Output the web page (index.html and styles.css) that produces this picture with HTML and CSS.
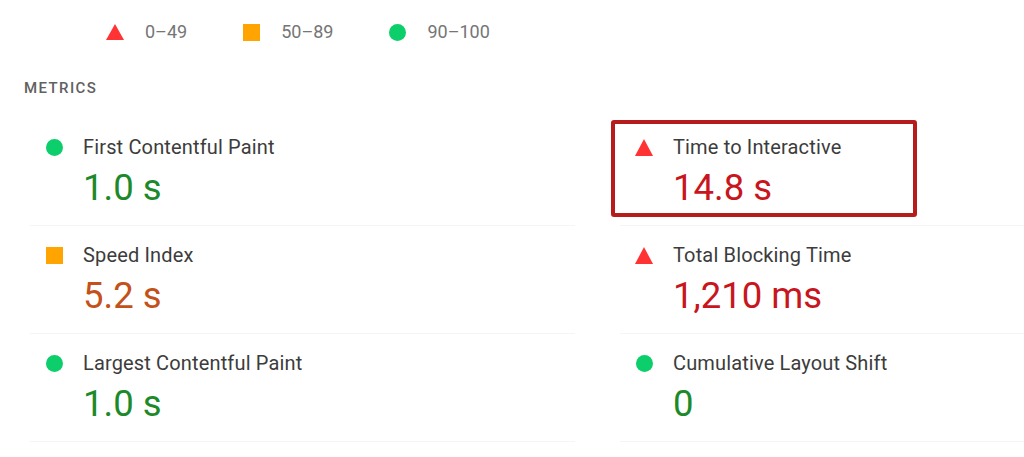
FILE: index.html
```html
<!DOCTYPE html>
<html lang="en">
<head>
  <meta charset="UTF-8">
  <title>Metrics</title>
  <link rel="stylesheet" href="styles.css">
</head>
<body>
  <div class="legend">
    <div class="legend-item"><span class="icon fail"></span>0–49</div>
    <div class="legend-item"><span class="icon average"></span>50–89</div>
    <div class="legend-item"><span class="icon pass"></span>90–100</div>
  </div>

  <div class="section-title">Metrics</div>

  <div class="metrics">
    <div class="metric">
      <span class="icon pass"></span>
      <div class="label">First Contentful Paint</div>
      <div class="value pass-text">1.0 s</div>
    </div>
    <div class="metric highlighted">
      <span class="icon fail"></span>
      <div class="label">Time to Interactive</div>
      <div class="value fail-text">14.8 s</div>
      <div class="highlight-box"></div>
    </div>
    <div class="metric">
      <span class="icon average"></span>
      <div class="label">Speed Index</div>
      <div class="value average-text">5.2 s</div>
    </div>
    <div class="metric">
      <span class="icon fail"></span>
      <div class="label">Total Blocking Time</div>
      <div class="value fail-text">1,210 ms</div>
    </div>
    <div class="metric">
      <span class="icon pass"></span>
      <div class="label">Largest Contentful Paint</div>
      <div class="value pass-text">1.0 s</div>
    </div>
    <div class="metric">
      <span class="icon pass"></span>
      <div class="label">Cumulative Layout Shift</div>
      <div class="value pass-text">0</div>
    </div>
  </div>
</body>
</html>
```

FILE: styles.css
```css
* {
  box-sizing: border-box;
}

html, body {
  margin: 0;
  padding: 0;
  background: #fff;
  font-family: Roboto, "Liberation Sans", sans-serif;
  overflow: hidden;
}

.legend {
  display: flex;
  gap: 56px;
  padding: 22px 0 0 106px;
  font-size: 18px;
  line-height: 20px;
  color: #757575;
}

.legend-item {
  display: flex;
  align-items: center;
  gap: 21px;
}

.icon {
  display: inline-block;
  flex: none;
}

.icon.pass {
  width: 17px;
  height: 17px;
  border-radius: 50%;
  background: #0cce6b;
}

.icon.average {
  width: 17px;
  height: 17px;
  background: #ffa400;
}

.icon.fail {
  width: 0;
  height: 0;
  border-left: 9px solid transparent;
  border-right: 9px solid transparent;
  border-bottom: 16px solid #ff3333;
}

.section-title {
  margin: 36px 0 0 24px;
  font-size: 15px;
  line-height: 20px;
  font-weight: 500;
  letter-spacing: 1.4px;
  text-transform: uppercase;
  color: #616161;
}

.metrics {
  display: grid;
  grid-template-columns: 545px 1fr;
  column-gap: 45px;
  margin: 20px 0 0 30px;
}

.metric {
  position: relative;
  display: grid;
  grid-template-columns: 53px 1fr;
  grid-template-rows: 24px 40px;
  row-gap: 9px;
  align-items: center;
  height: 108px;
  padding-top: 17px;
  border-bottom: 1px solid #f5f5f5;
}

.metric .icon {
  margin-left: 16px;
}

.metric .icon.fail {
  margin-left: 15px;
  border-bottom-width: 17px;
}

.label {
  font-size: 20px;
  line-height: 24px;
  letter-spacing: 0.15px;
  color: #3c3c3c;
}

.value {
  grid-column: 2;
  font-size: 36.5px;
  line-height: 40px;
}

.pass-text {
  color: #1c8a2a;
}

.average-text {
  color: #c4501a;
}

.fail-text {
  color: #c8161e;
}

.highlight-box {
  position: absolute;
  left: -9px;
  top: 2px;
  width: 306px;
  height: 97px;
  border: 4px solid #b71c1c;
  border-radius: 3px;
}
```
